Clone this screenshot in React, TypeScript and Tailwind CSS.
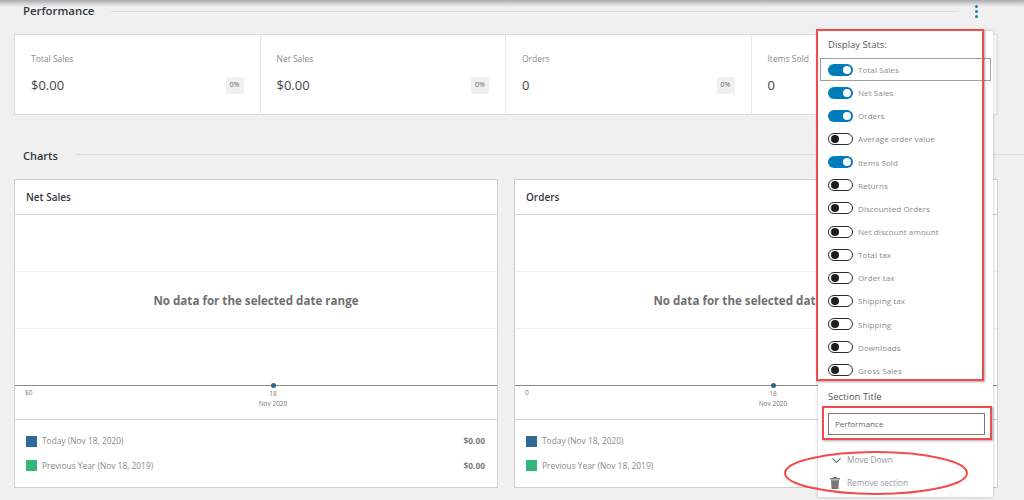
import React from 'react';
import { ChevronDown } from 'lucide-react';

const font = 'font-["Open_Sans","Noto_Sans",sans-serif]';

const stats = [
  { label: 'Total Sales', value: '$0.00', badge: true },
  { label: 'Net Sales', value: '$0.00', badge: true },
  { label: 'Orders', value: '0', badge: true },
  { label: 'Items Sold', value: '0', badge: false },
];

const toggles = [
  { label: 'Total Sales', on: true },
  { label: 'Net Sales', on: true },
  { label: 'Orders', on: true },
  { label: 'Average order value', on: false },
  { label: 'Items Sold', on: true },
  { label: 'Returns', on: false },
  { label: 'Discounted Orders', on: false },
  { label: 'Net discount amount', on: false },
  { label: 'Total tax', on: false },
  { label: 'Order tax', on: false },
  { label: 'Shipping tax', on: false },
  { label: 'Shipping', on: false },
  { label: 'Downloads', on: false },
  { label: 'Gross Sales', on: false },
];

const Toggle = ({ on }: { on: boolean }) =>
  on ? (
    <span className="flex h-[12px] w-[25px] shrink-0 items-center justify-end rounded-full bg-[#007cba] pr-[2px]">
      <span className="h-[8px] w-[8px] rounded-full bg-white" />
    </span>
  ) : (
    <span className="flex h-[12px] w-[25px] shrink-0 items-center rounded-full border border-[#2a2a2a] bg-white pl-[2px]">
      <span className="h-[8px] w-[8px] rounded-full bg-[#1e1e1e]" />
    </span>
  );

const ChartCard = ({ title, zero }: { title: string; zero: string }) => (
  <div className="flex h-[309px] w-[484px] flex-col border border-[#cfcfcf] bg-white">
    <div className="flex h-[35px] shrink-0 items-center border-b border-[#d4d4d4] pl-[11px] text-[10px] font-semibold text-[#32373c]">
      {title}
    </div>
    <div className="relative h-[171px] shrink-0 border-b border-[#8a8a8a]">
      <div className="h-[57px] border-b border-[#f2f2f2]" />
      <div className="h-[57px] border-b border-[#f2f2f2]" />
      <div className="absolute inset-x-0 top-[77px] text-center text-[11.6px] font-bold text-[#6f6f6f]">
        No data for the selected date range
      </div>
      <span className="absolute bottom-[-3px] left-[256px] h-[5px] w-[5px] rounded-full bg-[#2a6592]" />
    </div>
    <div className="relative h-[34px] shrink-0 border-b border-[#d4d4d4] text-[6.5px] text-[#777]">
      <span className="absolute left-[10px] top-[2px]">{zero}</span>
      <div className="absolute left-[233px] top-[3px] w-[50px] text-center leading-[10px]">
        <div>18</div>
        <div>Nov 2020</div>
      </div>
    </div>
    <div className="flex flex-1 flex-col justify-center gap-[12px] pl-[11px] pr-[12px] text-[8.4px] text-[#8a8a8a]">
      <div className="flex items-center">
        <span className="mr-[5px] h-[11px] w-[11px] bg-[#2f6a96]" />
        <span>Today (Nov 18, 2020)</span>
        <span className="ml-auto font-bold text-[#7a7a7a]">$0.00</span>
      </div>
      <div className="flex items-center">
        <span className="mr-[5px] h-[11px] w-[11px] bg-[#33b67a]" />
        <span>Previous Year (Nov 18, 2019)</span>
        <span className="ml-auto font-bold text-[#7a7a7a]">$0.00</span>
      </div>
    </div>
  </div>
);

export default function App() {
  return (
    <div className={`relative h-[500px] w-[1024px] overflow-hidden bg-[#f0f0f0] ${font}`}>
      <div className="h-[7px] bg-gradient-to-b from-[#a8a8a8] via-[#d2d2d2] to-[#f0f0f0]" />

      <div className="flex h-[8px] items-center pl-[23px] pr-[46px]">
        <span className="text-[11.4px] font-semibold text-[#32373c]">Performance</span>
        <span className="ml-[17px] h-px w-[848px] bg-[#dcdcdc]" />
        <span className="ml-auto flex flex-col gap-[2px]">
          <span className="h-[3px] w-[3px] rounded-full bg-[#1c79b0]" />
          <span className="h-[3px] w-[3px] rounded-full bg-[#1c79b0]" />
          <span className="h-[3px] w-[3px] rounded-full bg-[#1c79b0]" />
        </span>
      </div>

      <div className="ml-[14px] mt-[19px] flex h-[81px] w-[984px] border border-[#dedede] bg-white">
        {stats.map((s) => (
          <div key={s.label} className="flex w-[246px] flex-col border-r border-[#e6e6e6] pl-[16px] pr-[16px] pt-[18px]">
            <span className="text-[8.5px] text-[#8a8a8a]">{s.label}</span>
            <div className="mt-[10px] flex items-center justify-between">
              <span className="text-[13px] text-[#444]">{s.value}</span>
              {s.badge && (
                <span className="flex h-[17px] w-[18px] items-center justify-center rounded-[2px] bg-[#f0f0f0] text-[7px] text-[#666]">
                  0%
                </span>
              )}
            </div>
          </div>
        ))}
      </div>

      <div className="ml-[23px] mt-[33px] flex h-[16px] items-center">
        <span className="text-[11px] font-semibold text-[#32373c]">Charts</span>
        <span className="ml-[17px] mb-[3px] h-px flex-1 bg-[#dcdcdc]" />
      </div>

      <div className="ml-[14px] mt-[15px] flex gap-[16px]">
        <ChartCard title="Net Sales" zero="$0" />
        <ChartCard title="Orders" zero="0" />
      </div>

      {/* settings menu over the page */}
      <div className="absolute left-[818px] top-[31px] h-[466px] w-[175px] bg-white shadow-[0_0_3px_rgba(0,0,0,0.25)]">
        <div className="pl-[10px] pt-[7px] text-[9.5px] leading-[14px] text-[#555]">Display Stats:</div>
        <div className="mt-[6px]">
          {toggles.map((t, i) => (
            <div
              key={t.label}
              className={
                i === 0
                  ? 'mx-[2px] flex h-[23.15px] items-center border border-[#9aa0a6] pl-[7px] text-[8px] tracking-[0.1px] text-[#8a8a8a]'
                  : 'flex h-[23.15px] items-center pl-[10px] text-[8px] tracking-[0.1px] text-[#8a8a8a]'
              }
            >
              <Toggle on={t.on} />
              <span className="ml-[5px] mt-px">{t.label}</span>
            </div>
          ))}
        </div>
        <div className="mt-[8px] pl-[10px] text-[9.5px] leading-[14px] text-[#555]">Section Title</div>
        <div className="ml-[10px] mt-[9px] flex h-[22px] w-[157px] items-center border border-[#777] pl-[6px] pt-px text-[8px] text-[#666]">
          Performance
        </div>
        <div className="ml-[11px] mt-[18px] flex items-center text-[8.3px] text-[#9a9a9a]">
          <ChevronDown className="h-[15px] w-[15px] text-[#777]" strokeWidth={2} />
          <span className="ml-[3px]">Move Down</span>
        </div>
        <div className="ml-[12px] mt-[9px] flex items-center text-[8.3px] text-[#9a9a9a]">
          <svg width="10" height="12" viewBox="0 0 10 12" fill="#777">
            <path d="M3.5 0h3l.5 1h3v1.4H0V1h3zM1 3.2h8L8.4 12H1.6z" />
          </svg>
          <span className="ml-[7px]">Remove section</span>
        </div>
      </div>

      {/* red annotations drawn on the screenshot */}
      <div className="absolute left-[816px] top-[29px] h-[352px] w-[168px] border-2 border-[#f24b4b] shadow-[1px_1px_2px_rgba(0,0,0,0.35)]" />
      <div className="absolute left-[822px] top-[406px] h-[34px] w-[170px] border-2 border-[#f24b4b] shadow-[1px_1px_2px_rgba(0,0,0,0.35)]" />
      <svg className="absolute left-[780px] top-[448px]" width="194" height="50" viewBox="0 0 194 50" fill="none">
        <ellipse cx="96" cy="25" rx="91" ry="21" stroke="#f24b4b" strokeWidth="2" />
      </svg>
    </div>
  );
}
